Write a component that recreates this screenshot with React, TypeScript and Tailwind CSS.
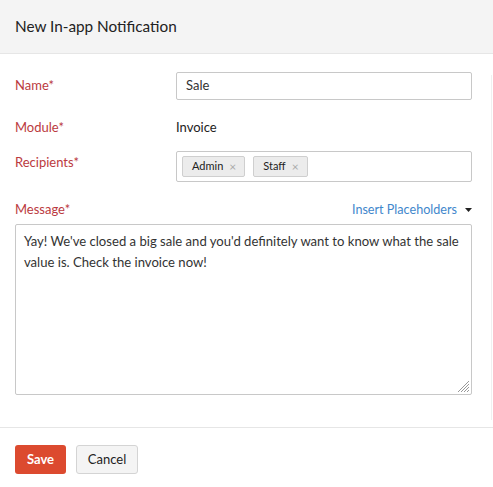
import React from "react";

export default function App() {
  const font = { fontFamily: "Lato, 'Open Sans', sans-serif" };
  return (
    <div className="w-[493px] h-[487px] bg-white text-[13px] text-[#222] relative" style={font}>
      <div className="h-[54px] bg-[#f4f4f4] border-b border-[#e6e6e6] flex items-center px-[15px]">
        <h1 className="text-[15.3px] text-[#222]">New In-app Notification</h1>
      </div>
      <div className="px-[15px] pt-[18px]">
        <div className="flex items-center h-[28px]">
          <label className="w-[161px] text-[#bb3a40]">Name*</label>
          <div className="w-[296px] h-[28px] border border-[#c8c8c8] rounded-[2px] flex items-center px-[9px] text-[#333]">Sale</div>
        </div>
        <div className="flex items-center h-[20px] mt-[18px]">
          <label className="w-[161px] text-[#bb3a40]">Module*</label>
          <span className="text-[#222]">Invoice</span>
        </div>
        <div className="flex items-start mt-[13px]">
          <label className="w-[161px] text-[#bb3a40] pt-[2px]">Recipients*</label>
          <div className="w-[296px] h-[31px] border border-[#c8c8c8] rounded-[2px] flex items-center gap-[8px] px-[5px]">
            {["Admin", "Staff"].map((t) => (
              <span key={t} className="h-[21px] bg-[#ececec] border border-[#cfcfcf] rounded-[2px] flex items-center gap-[6px] pl-[9px] pr-[8px] text-[11px] text-[#222]">
                {t}
                <span className="text-[#aaa] text-[12px] leading-none">×</span>
              </span>
            ))}
          </div>
        </div>
        <div className="flex items-center justify-between w-[457px] mt-[20px] h-[16px]">
          <label className="text-[#bb3a40]">Message*</label>
          <span className="flex items-center gap-[8px] text-[12.6px] text-[#3f87cc]">
            Insert Placeholders
            <svg width="7" height="4" viewBox="0 0 7 4"><path d="M0 0h7L3.5 4z" fill="#222" /></svg>
          </span>
        </div>
        <div className="relative w-[457px] h-[171px] mt-[6px] border border-[#c8c8c8] rounded-[2px] pl-[8px] pr-[4px] py-[6px] leading-[21px] text-[13.1px] text-[#333]">
          Yay! We've closed a big sale and you'd definitely want to know what the sale value is. Check the invoice now!
          <svg className="absolute right-[1px] bottom-[1px]" width="12" height="12" viewBox="0 0 12 12">
            <path d="M11 3L3 11M11 6L6 11M11 9L9 11M11 0L0 11" stroke="#999" strokeWidth="1" />
          </svg>
        </div>
      </div>
      <div className="mt-[32px] border-t border-[#e6e6e6] px-[15px] pt-[17px] flex gap-[10px]">
        <button className="h-[29px] w-[51px] bg-[#dc4a2f] text-white font-bold rounded-[3px] text-[13px]">Save</button>
        <button className="h-[29px] w-[62px] bg-[#f4f4f4] border border-[#d4d4d4] text-[#222] rounded-[3px] text-[13px]">Cancel</button>
      </div>
      <div className="absolute right-[1px] top-[75px] h-[345px] w-px bg-[#f0f0f0]" />
    </div>
  );
}
